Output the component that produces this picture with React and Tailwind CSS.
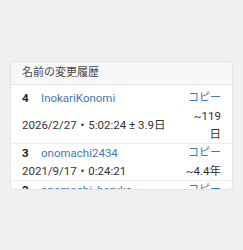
import React from "react";

const rows = [
  { no: 4, name: "InokariKonomi", date: "2026/2/27・5:02:24 ± 3.9日", ago: "~119日" },
  { no: 3, name: "onomachi2434", date: "2021/9/17・0:24:21", ago: "~4.4年" },
  { no: 2, name: "onomachi_haruka", date: "2020/5/02・18:11:40", ago: "~5.8年" },
  { no: 1, name: "onomachi", date: "2019/8/14・9:03:12", ago: "~6.5年" },
];

function App() {
  return (
    <div
      className="min-h-screen bg-[#eff0f2] px-[10px] pt-[61px]"
      style={{ fontFamily: 'Roboto, "Noto Sans CJK JP", sans-serif' }}
    >
      <div className="overflow-hidden rounded-[4px] border border-[#e2e3e5] bg-white">
        <div className="h-[23px] border-b border-[#e2e3e5] bg-[#f7f7f8] px-[11px] text-[11px] leading-[22px] text-[#4a4a4a]">
          名前の変更履歴
        </div>
        <div className="h-[104px] overflow-hidden pt-[4px]">
          {rows.map((r) => (
            <div
              key={r.no}
              className="grid grid-cols-[1fr_37px] items-center border-b border-[#ececee] pl-[11px] pr-[11px] text-[11.5px] leading-[18px] text-[#333] last:border-b-0"
            >
              <div className="flex">
                <span className="w-[19px] font-bold text-[#222]">{r.no}</span>
                <span className="text-[#3d7ab2]">{r.name}</span>
              </div>
              <div className="text-right text-[11px] text-[#3d7ab2]">コピー</div>
              <div>{r.date}</div>
              <div className="text-right">{r.ago}</div>
            </div>
          ))}
        </div>
      </div>
    </div>
  );
}

export default App;
